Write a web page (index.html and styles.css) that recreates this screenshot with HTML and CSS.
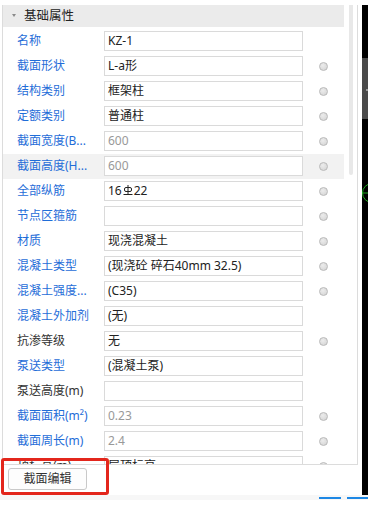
FILE: index.html
```html
<!DOCTYPE html>
<html lang="zh-CN">
<head>
<meta charset="utf-8">
<title>属性</title>
<link rel="stylesheet" href="styles.css">
</head>
<body>
<div class="app">
  <div class="main">
    <div class="left">
      <div class="panel">
        <div class="content">
          <div class="group-head"><span class="caret"></span><span class="group-title">基础属性</span></div>
          <div class="rows">
            <div class="row"><div class="label">名称</div><div class="field">KZ-1</div><div class="dot-cell"></div></div>
            <div class="row"><div class="label">截面形状</div><div class="field">L-a形</div><div class="dot-cell"><span class="dot"></span></div></div>
            <div class="row"><div class="label">结构类别</div><div class="field">框架柱</div><div class="dot-cell"><span class="dot"></span></div></div>
            <div class="row"><div class="label">定额类别</div><div class="field">普通柱</div><div class="dot-cell"><span class="dot"></span></div></div>
            <div class="row"><div class="label">截面宽度(B...</div><div class="field muted">600</div><div class="dot-cell"><span class="dot"></span></div></div>
            <div class="row active"><div class="label">截面高度(H...</div><div class="field muted">600</div><div class="dot-cell"><span class="dot"></span></div></div>
            <div class="row"><div class="label">全部纵筋</div><div class="field">16<svg class="rebar" width="10" height="11" viewBox="0 0 10 11"><rect x="1.5" y="2.5" width="7" height="4" rx="1.5" fill="none" stroke="#222" stroke-width="1"/><line x1="5" y1="0" x2="5" y2="10" stroke="#222" stroke-width="1"/><line x1="0.5" y1="9.5" x2="9.5" y2="9.5" stroke="#222" stroke-width="1"/></svg>22</div><div class="dot-cell"><span class="dot"></span></div></div>
            <div class="row"><div class="label">节点区箍筋</div><div class="field"></div><div class="dot-cell"><span class="dot"></span></div></div>
            <div class="row"><div class="label">材质</div><div class="field">现浇混凝土</div><div class="dot-cell"><span class="dot"></span></div></div>
            <div class="row"><div class="label">混凝土类型</div><div class="field">(现浇砼 碎石40mm 32.5)</div><div class="dot-cell"><span class="dot"></span></div></div>
            <div class="row"><div class="label">混凝土强度...</div><div class="field">(C35)</div><div class="dot-cell"><span class="dot"></span></div></div>
            <div class="row"><div class="label">混凝土外加剂</div><div class="field">(无)</div><div class="dot-cell"></div></div>
            <div class="row"><div class="label dark">抗渗等级</div><div class="field">无</div><div class="dot-cell"><span class="dot"></span></div></div>
            <div class="row"><div class="label">泵送类型</div><div class="field">(混凝土泵)</div><div class="dot-cell"></div></div>
            <div class="row"><div class="label dark">泵送高度(m)</div><div class="field"></div><div class="dot-cell"></div></div>
            <div class="row"><div class="label">截面面积(m²)</div><div class="field muted">0.23</div><div class="dot-cell"><span class="dot"></span></div></div>
            <div class="row"><div class="label">截面周长(m)</div><div class="field muted">2.4</div><div class="dot-cell"><span class="dot"></span></div></div>
            <div class="row"><div class="label dark">顶标高(m)</div><div class="field">层顶标高</div><div class="dot-cell"><span class="dot"></span></div></div>
          </div>
        </div>
        <div class="scrollbar"></div>
      </div>
      <div class="footer">
        <button class="btn" type="button">截面编辑</button>
      </div>
    </div>
    <div class="spacer"></div>
    <div class="canvas">
      <svg width="6" height="490" viewBox="0 0 6 490">
        <rect x="0" y="0" width="6" height="490" fill="#000"/>
        <rect x="0" y="53" width="6" height="61" fill="#4a4a4a"/>
        <rect x="4" y="84" width="2" height="2" fill="#9a9a9a"/>
        <circle cx="10" cy="188" r="9.5" fill="none" stroke="#1faa1f" stroke-width="1"/>
        <line x1="0" y1="188" x2="6" y2="188" stroke="#1faa1f" stroke-width="1"/>
      </svg>
    </div>
  </div>
  <div class="bottombar">
    <span class="tab-line first"></span>
    <span class="tab-line second"></span>
  </div>
  <div class="annotation"></div>
</div>
</body>
</html>
```

FILE: styles.css
```css
html, body {
  margin: 0;
  padding: 0;
  background: #fff;
}

body {
  width: 387px;
  height: 509px;
  overflow: hidden;
  font-family: "Noto Sans", "Noto Sans CJK SC", sans-serif;
  font-size: 12px;
  color: #222;
}

.app {
  position: relative;
  width: 387px;
  height: 509px;
  display: flex;
  flex-direction: column;
}

.main {
  display: flex;
  height: 495px;
}

.left {
  width: 358px;
  display: flex;
  flex-direction: column;
}

.panel {
  position: relative;
  box-sizing: border-box;
  margin: 5px 0 0 2px;
  width: 356px;
  height: 460px;
  border-left: 1px solid #dcdcdc;
  border-right: 1px solid #dcdcdc;
  border-bottom: 1px solid #dcdcdc;
  overflow: hidden;
}

.content {
  width: 341px;
  height: 100%;
  overflow: hidden;
}

.group-head {
  height: 22px;
  background: #ebebeb;
  display: flex;
  align-items: center;
  padding-left: 9px;
}

.caret {
  width: 0;
  height: 0;
  border-left: 2.5px solid transparent;
  border-right: 2.5px solid transparent;
  border-top: 3px solid #8a8a8a;
  margin-right: 8px;
  margin-top: -2px;
}

.group-title {
  font-size: 12.5px;
  line-height: 16px;
  color: #222;
}

.rows {
  padding-top: 2px;
}

.row {
  height: 25px;
  display: flex;
  align-items: flex-start;
}

.row.active {
  background: #f2f2f2;
}

.label {
  width: 101px;
  box-sizing: border-box;
  padding-left: 14px;
  height: 24px;
  line-height: 24px;
  color: #1f6dd8;
  white-space: nowrap;
  overflow: hidden;
}

.label.dark {
  color: #333;
}

.field {
  margin-top: 2px;
  box-sizing: border-box;
  width: 199px;
  height: 20px;
  border: 1px solid #dadada;
  background: #fff;
  padding-left: 3px;
  line-height: 18px;
  color: #222;
  white-space: nowrap;
  overflow: hidden;
  display: flex;
  align-items: center;
}

.field.muted {
  color: #999;
}

.rebar {
  margin: 0 1px 0 1px;
  position: relative;
  top: -1px;
}

.dot-cell {
  width: 41px;
  height: 24px;
  display: flex;
  align-items: center;
  justify-content: center;
}

.dot {
  width: 9px;
  height: 9px;
  box-sizing: border-box;
  border-radius: 50%;
  border: 1px solid #b9b9b9;
  background: radial-gradient(circle at 40% 35%, #ececec, #d2d2d2);
}

.scrollbar {
  position: absolute;
  top: 0;
  left: 346px;
  width: 4px;
  height: 170px;
  background: #e8e8e8;
  border-radius: 0 0 2px 2px;
}

.footer {
  height: 30px;
  box-sizing: border-box;
  padding: 3px 0 0 8px;
}

.btn {
  width: 79px;
  height: 22px;
  box-sizing: border-box;
  border: 1px solid #c9c9c9;
  border-radius: 3px;
  background: #fdfdfd;
  font-family: "Noto Sans", "Noto Sans CJK SC", sans-serif;
  font-size: 12px;
  color: #333;
  padding: 0;
  line-height: 20px;
}

.spacer {
  width: 4px;
}

.canvas {
  width: 6px;
  height: 490px;
  margin-top: 5px;
  overflow: hidden;
}

.canvas svg {
  display: block;
}

.bottombar {
  width: 368px;
  height: 5px;
  background: #f7f7f7;
  display: flex;
  align-items: flex-end;
  padding-bottom: 1px;
  box-sizing: border-box;
}

.tab-line {
  height: 2px;
  background: #1e88e5;
}

.tab-line.first {
  margin-left: 319px;
  width: 22px;
}

.tab-line.second {
  margin-left: 6px;
  width: 21px;
}

.annotation {
  position: absolute;
  left: 1px;
  top: 458px;
  width: 108px;
  height: 37px;
  box-sizing: border-box;
  border: 3px solid #e3261c;
  border-radius: 3px;
}
```
